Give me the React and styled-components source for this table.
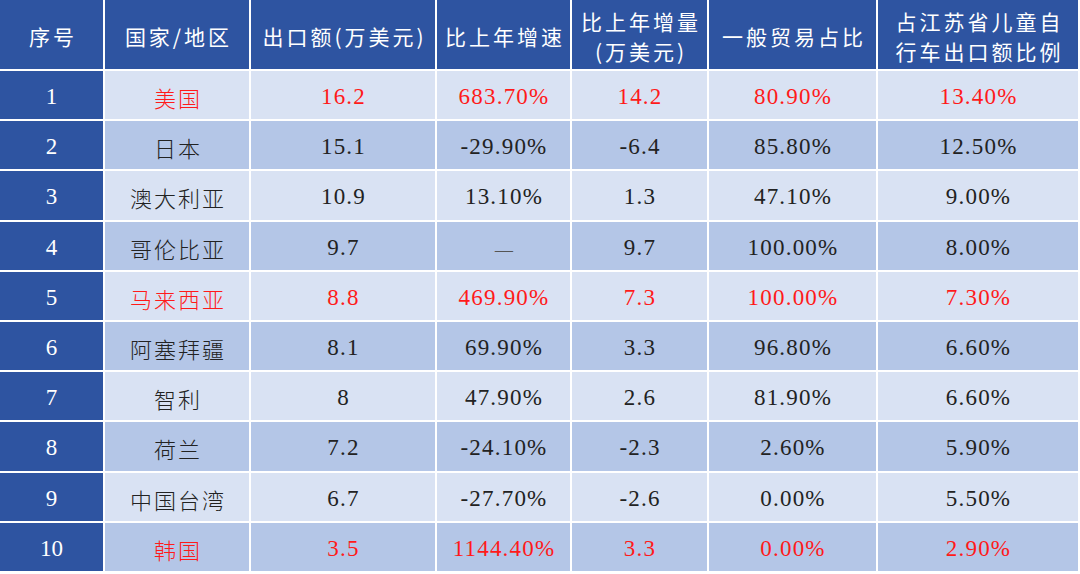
import React from 'react';
import styled, { createGlobalStyle } from 'styled-components';

const GlobalStyle = createGlobalStyle`
  html, body {
    margin: 0;
    padding: 0;
    background: #ffffff;
  }
`;

const rows = [
  { no: 1, name: '美国', amount: '16.2', growth: '683.70%', delta: '14.2', general: '80.90%', share: '13.40%', hot: true },
  { no: 2, name: '日本', amount: '15.1', growth: '-29.90%', delta: '-6.4', general: '85.80%', share: '12.50%' },
  { no: 3, name: '澳大利亚', amount: '10.9', growth: '13.10%', delta: '1.3', general: '47.10%', share: '9.00%' },
  { no: 4, name: '哥伦比亚', amount: '9.7', growth: '—', delta: '9.7', general: '100.00%', share: '8.00%' },
  { no: 5, name: '马来西亚', amount: '8.8', growth: '469.90%', delta: '7.3', general: '100.00%', share: '7.30%', hot: true },
  { no: 6, name: '阿塞拜疆', amount: '8.1', growth: '69.90%', delta: '3.3', general: '96.80%', share: '6.60%' },
  { no: 7, name: '智利', amount: '8', growth: '47.90%', delta: '2.6', general: '81.90%', share: '6.60%' },
  { no: 8, name: '荷兰', amount: '7.2', growth: '-24.10%', delta: '-2.3', general: '2.60%', share: '5.90%' },
  { no: 9, name: '中国台湾', amount: '6.7', growth: '-27.70%', delta: '-2.6', general: '0.00%', share: '5.50%' },
  { no: 10, name: '韩国', amount: '3.5', growth: '1144.40%', delta: '3.3', general: '0.00%', share: '2.90%', hot: true },
];

const headers = [
  ['序号'],
  ['国家/地区'],
  ['出口额(万美元)'],
  ['比上年增速'],
  ['比上年增量', '(万美元)'],
  ['一般贸易占比'],
  ['占江苏省儿童自', '行车出口额比例'],
];

const Table = styled.div`
  display: grid;
  grid-template-columns: 103px 144px 184px 133px 135px 167px 200px;
  grid-template-rows: 69px;
  grid-auto-rows: 48.2px;
  gap: 2px;
  width: 1078px;
  background: #ffffff;
`;

const HeadCell = styled.div`
  display: flex;
  flex-direction: column;
  align-items: center;
  justify-content: center;
  padding-top: 2px;
  padding-left: 3px;
  box-sizing: border-box;
  background: #2e54a1;
  color: #ffffff;
  font-family: "Noto Sans CJK SC", "Noto Sans", sans-serif;
  font-size: 21px;
  letter-spacing: 3px;
  line-height: 30px;
  white-space: nowrap;
`;

const NoCell = styled.div`
  display: flex;
  align-items: center;
  justify-content: center;
  padding-top: 4px;
  box-sizing: border-box;
  background: #2e54a1;
  color: #ffffff;
  font-family: "Liberation Serif", serif;
  font-size: 23px;
`;

const Cell = styled.div`
  display: flex;
  align-items: center;
  justify-content: center;
  padding-top: 4px;
  padding-left: ${(p) => (p.$cjk ? '2px' : '1px')};
  box-sizing: border-box;
  background: ${(p) => (p.$dark ? '#b4c6e7' : '#d9e2f3')};
  color: ${(p) => (p.$hot ? '#ff1a1a' : '#222222')};
  font-family: ${(p) =>
    p.$cjk
      ? '"Noto Sans CJK SC", "Noto Sans", sans-serif'
      : '"Liberation Serif", "Noto Sans CJK SC", serif'};
  font-weight: ${(p) => (p.$cjk ? 300 : 400)};
  font-size: ${(p) => (p.$cjk ? '22px' : '23px')};
  letter-spacing: ${(p) => (p.$cjk ? '2px' : '1.2px')};
  white-space: nowrap;
`;

const Dash = styled.span`
  color: #555555;
  font-family: "Noto Sans CJK SC", sans-serif;
  font-weight: 300;
  letter-spacing: 0;
`;

const App = () => (
  <>
    <GlobalStyle />
    <Table>
      {headers.map((lines, i) => (
        <HeadCell key={i}>
          {lines.map((line) => (
            <span key={line}>{line}</span>
          ))}
        </HeadCell>
      ))}
      {rows.map((r, i) => {
        const dark = i % 2 === 1;
        return (
          <React.Fragment key={r.no}>
            <NoCell>{r.no}</NoCell>
            <Cell $cjk $dark={dark} $hot={r.hot}>{r.name}</Cell>
            <Cell $dark={dark} $hot={r.hot}>{r.amount}</Cell>
            <Cell $dark={dark} $hot={r.hot}>
              {r.growth === '—' ? <Dash>—</Dash> : r.growth}
            </Cell>
            <Cell $dark={dark} $hot={r.hot}>{r.delta}</Cell>
            <Cell $dark={dark} $hot={r.hot}>{r.general}</Cell>
            <Cell $dark={dark} $hot={r.hot}>{r.share}</Cell>
          </React.Fragment>
        );
      })}
    </Table>
  </>
);

export default App;
